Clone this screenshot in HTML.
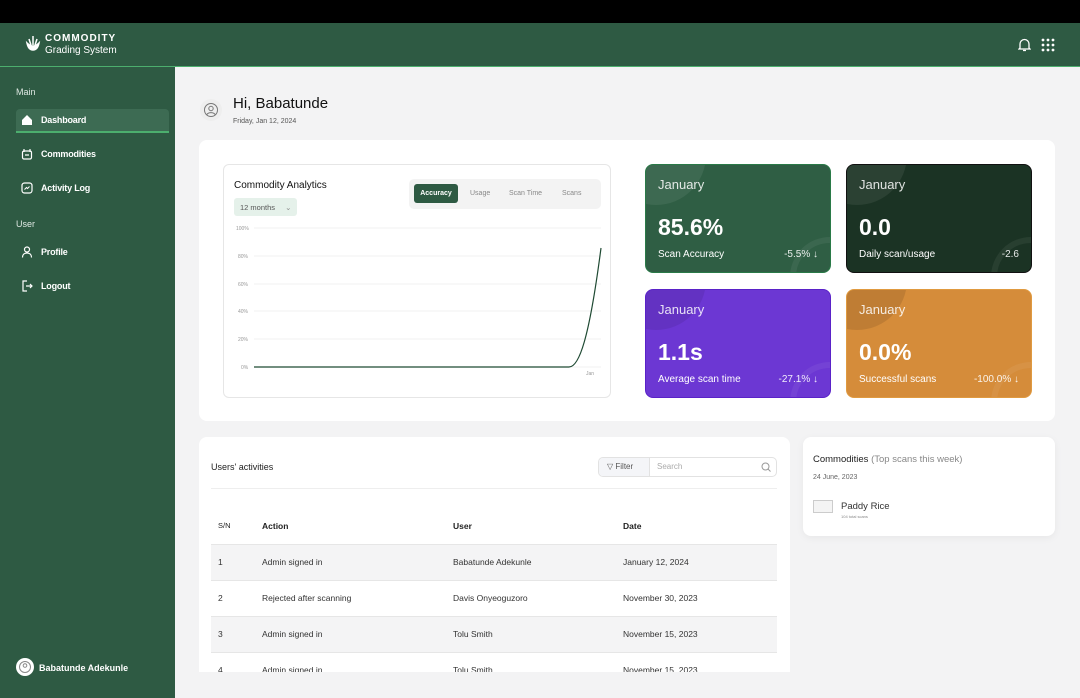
<!DOCTYPE html><html><head><style>
*{box-sizing:border-box;margin:0;padding:0}
body{width:1080px;height:698px;overflow:hidden;font-family:"Liberation Sans",sans-serif;background:#f3f3f4;position:relative}
.abs{position:absolute}
.top{left:0;top:0;width:1080px;height:23px;background:#000}
.hdr{left:0;top:23px;width:1080px;height:44px;background:#2e5a43;border-bottom:1px solid #4caf6e}
.side{left:0;top:67px;width:175px;height:631px;background:#2e5a43;color:#fff}
.nav{position:absolute;left:16px;width:153px;height:24px;font-size:9px;font-weight:bold;display:flex;align-items:center;padding-left:5px;gap:8px;letter-spacing:-0.2px}
.sec{position:absolute;left:16px;font-size:9px;color:#dfe8e3}
.card{background:#fff;border-radius:8px}
.stat{border-radius:8px;color:#fff;overflow:hidden;width:186px;height:109px}
.stat .m{position:absolute;left:12px;top:12px;font-size:13px;opacity:.85}
.stat .v{position:absolute;left:12px;top:49px;font-size:23px;font-weight:bold}
.stat .l{position:absolute;left:12px;top:84px;font-size:10px}
.stat .c{position:absolute;right:12px;top:84px;font-size:10px;opacity:.9}
.stat .ci{position:absolute;left:-40px;top:-60px;width:100px;height:100px;border-radius:50%;background:rgba(255,255,255,.07)}
.stat .cr{position:absolute;right:-40px;bottom:-45px;width:80px;height:80px;border-radius:50%;border:6px solid rgba(255,255,255,.06)}
table{border-collapse:collapse;width:566px;font-size:8.5px;color:#333}
td,th{height:36px;text-align:left;padding-left:7px}
th{font-weight:bold;color:#222}
tr.g td{background:#f4f4f5}
tr td{border-top:1px solid #e6e6e6}
</style></head><body>
<div class="abs top"></div>
<div class="abs hdr">
<svg class="abs" style="left:25px;top:12px" width="16" height="18" viewBox="0 0 16 18"><path d="M2 8c1 5 3 7 6 7s5-2 6-7c-2 2-4 3-6 3S4 10 2 8z M4 4l2 6M8 1v9M12 4l-2 6" fill="#fff" stroke="#fff" stroke-width="1.5"/></svg>
<div class="abs" style="left:45px;top:10px;color:#fff;font-size:10px;font-weight:bold;letter-spacing:1px">COMMODITY</div>
<div class="abs" style="left:45px;top:22px;color:#fff;font-size:10px">Grading System</div>
<svg class="abs" style="left:1018px;top:14px" width="13" height="15" viewBox="0 0 13 15"><path d="M2 11V7a4.5 4.5 0 019 0v4l1 1H1zM5 13.5h3" fill="none" stroke="#fff" stroke-width="1.3"/></svg>
<svg class="abs" style="left:1041px;top:15px" width="14" height="14"><g fill="#fff"><circle cx="2" cy="2" r="1.4"/><circle cx="7" cy="2" r="1.4"/><circle cx="12" cy="2" r="1.4"/><circle cx="2" cy="7" r="1.4"/><circle cx="7" cy="7" r="1.4"/><circle cx="12" cy="7" r="1.4"/><circle cx="2" cy="12" r="1.4"/><circle cx="7" cy="12" r="1.4"/><circle cx="12" cy="12" r="1.4"/></g></svg>
</div>
<div class="abs side">
<div class="sec" style="top:20px">Main</div>
<div class="nav" style="top:42px;background:#3d6b53;border-radius:4px 4px 0 0;border-bottom:2px solid #4caf6e;height:24px"><svg width="12" height="12"><path d="M1 6L6 1l5 5v5H1z" fill="#fff"/></svg>Dashboard</div>
<div class="nav" style="top:75px"><svg width="12" height="12"><rect x="1.5" y="3" width="9" height="8" rx="1.5" fill="none" stroke="#fff" stroke-width="1.2"/><path d="M3 1v3M9 1v3M4 7h4" stroke="#fff" stroke-width="1.2"/></svg>Commodities</div>
<div class="nav" style="top:109px"><svg width="12" height="12"><rect x="1" y="1" width="10" height="10" rx="2.5" fill="none" stroke="#fff" stroke-width="1.2"/><path d="M3.5 7.5l2-2 1 1 2-2" stroke="#fff" fill="none"/></svg>Activity Log</div>
<div class="sec" style="top:152px">User</div>
<div class="nav" style="top:173px"><svg width="12" height="12"><circle cx="6" cy="3.5" r="2.5" fill="none" stroke="#fff" stroke-width="1.2"/><path d="M1.5 11.5c0-3 2-4.5 4.5-4.5s4.5 1.5 4.5 4.5" fill="none" stroke="#fff" stroke-width="1.2"/></svg>Profile</div>
<div class="nav" style="top:207px"><svg width="12" height="12"><path d="M6 1H2v10h4M5 6h6M9 4l2 2-2 2" fill="none" stroke="#fff" stroke-width="1.2"/></svg>Logout</div>
<div class="abs" style="left:16px;top:591px;width:18px;height:18px;border-radius:50%;background:#fff"><svg width="18" height="18"><circle cx="9" cy="9" r="5.5" fill="none" stroke="#888"/><circle cx="9" cy="7.5" r="1.8" fill="none" stroke="#888"/></svg></div>
<div class="abs" style="left:39px;top:596px;font-size:9px;font-weight:bold">Babatunde Adekunle</div>
</div>

<div class="abs" style="left:200px;top:99px;width:22px;height:22px;border-radius:50%;background:#eee"><svg width="22" height="22"><circle cx="11" cy="11" r="6.5" fill="none" stroke="#777"/><circle cx="11" cy="9.5" r="2.2" fill="none" stroke="#777"/><path d="M6.8 15.5c2-2.5 6.4-2.5 8.4 0" fill="none" stroke="#777"/></svg></div>
<div class="abs" style="left:233px;top:95px;font-size:15px;color:#111">Hi, Babatunde</div>
<div class="abs" style="left:233px;top:118px;font-size:7px;color:#555">Friday, Jan 12, 2024</div>

<div class="abs card" style="left:199px;top:140px;width:856px;height:281px"></div>
<div class="abs" style="left:223px;top:164px;width:388px;height:234px;border:1px solid #e6e6e6;border-radius:6px;background:#fff">
<div class="abs" style="left:10px;top:15px;font-size:10px;color:#111">Commodity Analytics</div>
<div class="abs" style="left:10px;top:33px;width:63px;height:18px;background:#e5f1ea;border-radius:3px;font-size:7.5px;color:#555;padding:5px 0 0 6px">12 months <span style="margin-left:8px;color:#888">⌄</span></div>
<div class="abs" style="left:185px;top:14px;width:192px;height:30px;background:#f3f3f3;border-radius:5px"></div>
<div class="abs" style="left:190px;top:19px;width:44px;height:19px;background:#2e5a43;border-radius:3px;color:#fff;font-size:7px;font-weight:bold;text-align:center;line-height:19px">Accuracy</div>
<div class="abs" style="left:246px;top:25px;font-size:7px;color:#888">Usage</div>
<div class="abs" style="left:285px;top:25px;font-size:7px;color:#888">Scan Time</div>
<div class="abs" style="left:338px;top:25px;font-size:7px;color:#888">Scans</div>
<svg class="abs" style="left:0;top:55px" width="388" height="160" font-size="5" fill="#999">
<g stroke="#f0f0f0"><line x1="30" y1="8" x2="377" y2="8"/><line x1="30" y1="36" x2="377" y2="36"/><line x1="30" y1="64" x2="377" y2="64"/><line x1="30" y1="91" x2="377" y2="91"/><line x1="30" y1="119" x2="377" y2="119"/><line x1="30" y1="147" x2="377" y2="147"/></g>
<text x="12" y="10">100%</text><text x="14" y="38">80%</text><text x="14" y="66">60%</text><text x="14" y="93">40%</text><text x="14" y="121">20%</text><text x="17" y="149">0%</text><text x="362" y="155">Jan</text>
<path d="M30 147H345C355 147 365 120 377 28" fill="none" stroke="#1f4a33" stroke-width="1.2"/>
</svg>
</div>

<div class="abs stat" style="left:645px;top:164px;background:#2f5e44;border:1px solid #2a7a48"><div class="ci"></div><div class="cr"></div><div class="m">January</div><div class="v">85.6%</div><div class="l">Scan Accuracy</div><div class="c">-5.5% ↓</div></div>
<div class="abs stat" style="left:846px;top:164px;background:#1b3324;border:1px solid #111"><div class="ci"></div><div class="cr"></div><div class="m">January</div><div class="v">0.0</div><div class="l">Daily scan/usage</div><div class="c">-2.6</div></div>
<div class="abs stat" style="left:645px;top:289px;background:#6c37d3;border:1px solid #5a22c8"><div class="ci" style="background:rgba(0,0,0,.08)"></div><div class="cr"></div><div class="m">January</div><div class="v">1.1s</div><div class="l">Average scan time</div><div class="c">-27.1% ↓</div></div>
<div class="abs stat" style="left:846px;top:289px;background:#d58c3a;border:1px solid #e09a40"><div class="ci" style="background:rgba(0,0,0,.1)"></div><div class="cr"></div><div class="m">January</div><div class="v">0.0%</div><div class="l">Successful scans</div><div class="c">-100.0% ↓</div></div>

<div class="abs card" style="left:199px;top:437px;width:591px;height:235px;border-radius:8px 8px 0 0;overflow:hidden">
<div class="abs" style="left:12px;top:25px;font-size:9px;color:#222">Users' activities</div>
<div class="abs" style="left:399px;top:20px;width:179px;height:20px;border:1px solid #e2e2e2;border-radius:5px"></div>
<div class="abs" style="left:400px;top:21px;width:51px;height:18px;background:#f4f5f8;border-right:1px solid #e2e2e2;border-radius:4px 0 0 4px;font-size:8px;color:#555;padding:4px 0 0 8px">▽ Filter</div>
<div class="abs" style="left:458px;top:25px;font-size:8px;color:#aaa">Search</div>
<svg class="abs" style="left:562px;top:25px" width="10" height="10"><circle cx="4.5" cy="4.5" r="3.5" fill="none" stroke="#999"/><path d="M7 7l2.5 2.5" stroke="#999"/></svg>
<div class="abs" style="left:12px;top:51px;width:566px;height:1px;background:#eee"></div>
<table class="abs" style="left:12px;top:71px">
<tr><th style="border:0;width:44px;font-weight:normal;font-size:7.5px">S/N</th><th style="border:0;width:191px">Action</th><th style="border:0;width:170px">User</th><th style="border:0">Date</th></tr>
<tr class="g"><td>1</td><td>Admin signed in</td><td>Babatunde Adekunle</td><td>January 12, 2024</td></tr>
<tr><td>2</td><td>Rejected after scanning</td><td>Davis Onyeoguzoro</td><td>November 30, 2023</td></tr>
<tr class="g"><td>3</td><td>Admin signed in</td><td>Tolu Smith</td><td>November 15, 2023</td></tr>
<tr><td>4</td><td>Admin signed in</td><td>Tolu Smith</td><td>November 15, 2023</td></tr>
</table>
</div>

<div class="abs card" style="left:803px;top:437px;width:252px;height:99px;box-shadow:0 2px 8px rgba(0,0,0,.05)">
<div class="abs" style="left:10px;top:17px;font-size:9.5px;color:#222">Commodities <span style="color:#888">(Top scans this week)</span></div>
<div class="abs" style="left:10px;top:37px;font-size:7px;color:#666">24 June, 2023</div>
<div class="abs" style="left:10px;top:63px;width:20px;height:13px;border:1px solid #ccc;background:#f4f4f4"></div>
<div class="abs" style="left:38px;top:64px;font-size:9.5px;color:#333">Paddy Rice</div>
<div class="abs" style="left:38px;top:77px;font-size:4px;color:#888">104 total scans</div>
</div>
</body></html>
